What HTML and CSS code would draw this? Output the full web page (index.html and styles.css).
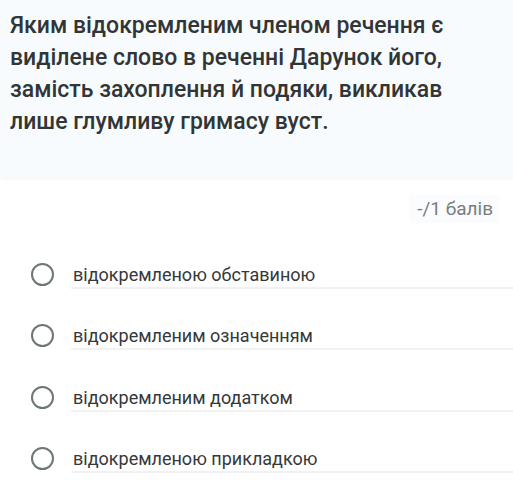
FILE: index.html
```html
<!DOCTYPE html>
<html lang="uk">
<head>
<meta charset="utf-8">
<link rel="stylesheet" href="styles.css">
</head>
<body>
<div class="question">
  <p class="title">Яким відокремленим членом речення є виділене слово в реченні Дарунок його, замість захоплення й подяки, викликав лише глумливу гримасу вуст.</p>
</div>
<div class="score-row"><span class="score">-/1 балів</span></div>
<ul class="options">
  <li class="option"><span class="radio"></span><span class="label">відокремленою обставиною</span></li>
  <li class="option"><span class="radio"></span><span class="label">відокремленим означенням</span></li>
  <li class="option"><span class="radio"></span><span class="label">відокремленим додатком</span></li>
  <li class="option"><span class="radio"></span><span class="label">відокремленою прикладкою</span></li>
</ul>
</body>
</html>
```

FILE: styles.css
```css
html, body {
  margin: 0;
  padding: 0;
  background: #ffffff;
  font-family: Roboto, "Noto Sans", sans-serif;
}
.question {
  background: #f8fbfd;
  height: 177px;
  padding: 10px 30px 0 10px;
  box-sizing: border-box;
  box-shadow: 0 2px 3px rgba(240, 244, 246, 0.8);
}
.title {
  margin: 0;
  font-size: 23px;
  line-height: 32px;
  font-weight: 500;
  color: #323536;
}
.score-row {
  display: flex;
  justify-content: flex-end;
  padding: 18px 13px 0 0;
}
.score {
  background: #fafcfd;
  color: #7a7d80;
  font-size: 19px;
  line-height: 28px;
  padding: 0 7px 0 8px;
}
.options {
  list-style: none;
  margin: 0;
  padding: 40px 0 0 31px;
}
.option {
  display: flex;
  align-items: flex-start;
  margin-bottom: 35.3px;
}
.option:last-child {
  margin-bottom: 0;
}
.radio {
  width: 19px;
  height: 19px;
  border: 2.5px solid #6c7676;
  border-radius: 50%;
  flex: none;
  margin-right: 17px;
}
.label {
  flex: 1;
  font-size: 18px;
  color: #353839;
  line-height: 24px;
  padding-left: 2px;
  border-bottom: 2px solid #f1f1f1;
}
```
